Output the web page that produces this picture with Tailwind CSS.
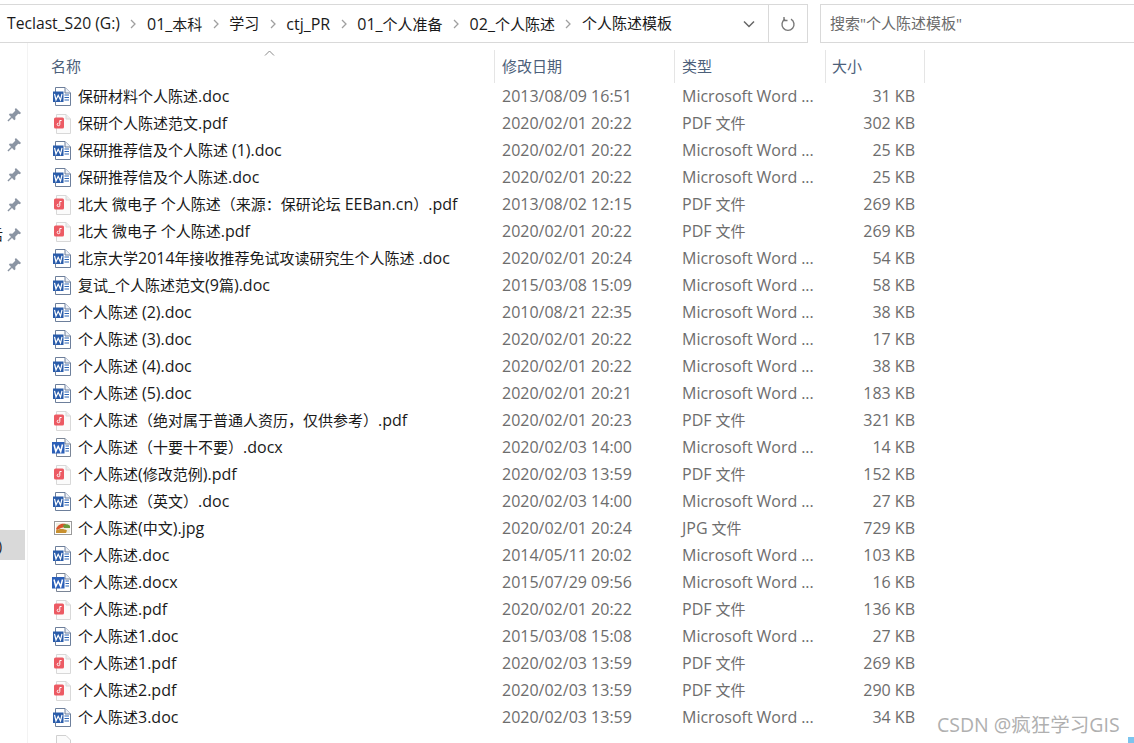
<!DOCTYPE html>
<html lang="en">
    <head>
        <meta charset="utf-8">
        <title>个人陈述模板</title>
        <script src="https://cdn.jsdelivr.net/npm/@tailwindcss/browser@4"></script>
    </head>
    <body class="bg-white text-[#1a1a1a] overflow-hidden" style="font-family: 'Open Sans', 'Noto Sans CJK SC', sans-serif;">

        <!-- icons -->
        <svg class="hidden">
            <symbol id="word" viewBox="0 0 20 20">
                <path d="M3.500 .5H13L18.500 6V18.500H3.500Z" fill="#fff" stroke="#6d7f9b"/>
                <path d="M13 .5V6H18.500" fill="#eef2f8" stroke="#6d7f9b"/>
                <rect x="1" y="4.500" width="10.500" height="10.500" fill="#2a5caa"/>
                <path d="M2.500 6.800 4 13 6.200 8.300 8.500 13 10 6.800" fill="none" stroke="#fff" stroke-width="1.200"/>
                <path d="M12.500 8H17M12.500 10.500H17M12.500 13H17" stroke="#2f66b5"/>
            </symbol>
            <symbol id="wordx" viewBox="0 0 20 20">
                <path d="M4.500 .5H13L18.500 6V18.500H4.500Z" fill="#fff" stroke="#7a8596"/>
                <path d="M13 .5V6H18.500" fill="#eef2f8" stroke="#7a8596"/>
                <rect x="0" y="4" width="12.500" height="11.500" fill="#2b5fb8"/>
                <path d="M2 6.500 3.800 13.500 6.200 8.500 8.700 13.500 10.500 6.500" fill="none" stroke="#fff" stroke-width="1.500"/>
                <path d="M13.500 8H17M13.500 10.500H17M13.500 13H17" stroke="#2f66b5"/>
            </symbol>
            <symbol id="pdf" viewBox="0 0 20 20">
                <path d="M4.500 .5H14L18.500 5V19.500H4.500Z" fill="#fbfbfb" stroke="#d8d8d8"/>
                <path d="M14 .5V5H18.500" fill="#eee" stroke="#d8d8d8"/>
                <rect x="2" y="3.500" width="10" height="11" rx="1.500" fill="#ec5a63"/>
                <path d="M7.800 6.500V10.400A1.300 1.300 0 1 1 6.500 9.100M7.800 6.500H9.600" fill="none" stroke="#fff" stroke-width="1"/>
            </symbol>
            <symbol id="jpg" viewBox="0 0 20 20">
                <rect x="2.500" y="2.500" width="17" height="13" fill="#fff" stroke="#9a9a9a"/>
                <rect x="4" y="4" width="14" height="10" fill="#f1efe2"/>
                <path d="M4 10C6 5 10 4 14 5L13 8 9 9 5 11Z" fill="#d9542b"/>
                <path d="M11 6C13 4.500 17 5 18 7V9H12Z" fill="#6b9a3c"/>
                <path d="M4 14V11.500C7 9.500 12 9.500 15 11.500L14 14Z" fill="#c8902f"/>
            </symbol>
            <symbol id="blank" viewBox="0 0 20 20">
                <path d="M4.500 .5H14L18.500 5V19.500H4.500Z" fill="#fbfbfb" stroke="#d0d0d0"/>
            </symbol>
            <symbol id="pin" viewBox="0 0 16 16">
                <path d="M9.500 1 15 6.500 13.500 7.700 12 7.200 8.800 10.400 9 13 7.700 14 2 8.300 3 7 5.600 7.200 8.800 4 8.300 2.500Z" fill="#8b95a3"/>
                <path d="M5 11 1 15" stroke="#8b95a3" stroke-width="1.600"/>
            </symbol>
        </svg>

        <div class="relative h-[743px] w-[1134px] overflow-hidden">

            <!-- address bar -->
            <div class="flex pt-1 h-[43px]">
                <div class="flex items-stretch w-[808px] border-y border-r border-[#d9d9d9] text-[15px]">
                    <div class="flex-1 flex items-center pl-[7px] whitespace-nowrap">
                        <span class="text-[15.7px]">Teclast_S20 (G:)</span>
                        <svg class="w-[8px] h-[10px] mx-[9.5px]" viewBox="0 0 8 10"><path d="M2 1 6 5 2 9" fill="none" stroke="#a0a0a0" stroke-width="1.300"/></svg>
                        <span><span class="text-[16px]">01_</span>本科</span>
                        <svg class="w-[8px] h-[10px] mx-[9.5px]" viewBox="0 0 8 10"><path d="M2 1 6 5 2 9" fill="none" stroke="#a0a0a0" stroke-width="1.300"/></svg>
                        <span>学习</span>
                        <svg class="w-[8px] h-[10px] mx-[9.5px]" viewBox="0 0 8 10"><path d="M2 1 6 5 2 9" fill="none" stroke="#a0a0a0" stroke-width="1.300"/></svg>
                        <span class="text-[16px]">ctj_PR</span>
                        <svg class="w-[8px] h-[10px] mx-[9.5px]" viewBox="0 0 8 10"><path d="M2 1 6 5 2 9" fill="none" stroke="#a0a0a0" stroke-width="1.300"/></svg>
                        <span><span class="text-[16px]">01_</span>个人准备</span>
                        <svg class="w-[8px] h-[10px] mx-[9.5px]" viewBox="0 0 8 10"><path d="M2 1 6 5 2 9" fill="none" stroke="#a0a0a0" stroke-width="1.300"/></svg>
                        <span><span class="text-[16px]">02_</span>个人陈述</span>
                        <svg class="w-[8px] h-[10px] mx-[9.5px]" viewBox="0 0 8 10"><path d="M2 1 6 5 2 9" fill="none" stroke="#a0a0a0" stroke-width="1.300"/></svg>
                        <span>个人陈述模板</span>
                    </div>
                    <div class="w-[39px] flex items-center justify-center">
                        <svg class="w-[12px] h-[8px]" viewBox="0 0 12 8"><path d="M1 1.500 6 6.500 11 1.500" fill="none" stroke="#666" stroke-width="1.500"/></svg>
                    </div>
                    <div class="w-[39px] flex items-center justify-center border-l border-[#d9d9d9]">
                        <svg class="w-[16px] h-[16px]" viewBox="0 0 16 16"><path d="M5 3.200A6 6 0 1 0 11 3.200" fill="none" stroke="#777" stroke-width="1.400"/><path d="M4 1V4.500H7.500" fill="none" stroke="#777" stroke-width="1.400"/></svg>
                    </div>
                </div>
                <div class="ml-[12px] flex-1 flex items-center pl-[9px] border-y border-l border-[#d9d9d9] text-[15px] text-[#6b6b6b]">搜索"个人陈述模板"</div>
            </div>

            <div class="flex">
                <!-- nav pane, mostly cut off -->
                <div class="w-[28px] h-[700px] border-r border-[#f3f3f3] shrink-0 pt-[56px]">
                    <div class="flex flex-col items-start">
                        <div class="h-[30px] pl-[7px] flex items-center"><svg class="w-[15px] h-[15px]"><use href="#pin"/></svg></div>
                        <div class="h-[30px] pl-[7px] flex items-center"><svg class="w-[15px] h-[15px]"><use href="#pin"/></svg></div>
                        <div class="h-[30px] pl-[7px] flex items-center"><svg class="w-[15px] h-[15px]"><use href="#pin"/></svg></div>
                        <div class="h-[30px] pl-[7px] flex items-center"><svg class="w-[15px] h-[15px]"><use href="#pin"/></svg></div>
                        <div class="relative h-[30px] pl-[7px] flex items-center">
                            <span class="absolute left-[-11px] text-[14px]">后</span>
                            <svg class="w-[15px] h-[15px]"><use href="#pin"/></svg>
                        </div>
                        <div class="h-[30px] pl-[7px] flex items-center"><svg class="w-[15px] h-[15px]"><use href="#pin"/></svg></div>
                    </div>
                    <div class="mt-[251px] w-[25px] h-[30px] bg-[#d9d9d9] flex items-center overflow-hidden text-[14px]">
                        <span class="-ml-[2px]">)</span>
                    </div>
                </div>

                <div class="flex-1 min-w-0">
                    <!-- column headers -->
                    <div class="relative flex h-[40px] text-[15px] text-[#4c607a]">
                        <div class="w-[467px] pl-[23px] pt-[5px] border-r border-[#e5e5e5] mt-[7px]">名称</div>
                        <div class="w-[180px] pl-[7px] pt-[5px] border-r border-[#e5e5e5] mt-[7px]">修改日期</div>
                        <div class="w-[151px] pl-[7px] pt-[5px] border-r border-[#e5e5e5] mt-[7px]">类型</div>
                        <div class="w-[99px] pl-[6px] pt-[5px] border-r border-[#e5e5e5] mt-[7px]">大小</div>
                        <svg class="absolute left-[236px] top-[7px] w-[11px] h-[6px]" viewBox="0 0 11 6"><path d="M1 5.500 5.500 1 10 5.500" fill="none" stroke="#8a8a8a"/></svg>
                    </div>
                    <!-- rows get filled in below -->
                    <div id="files"></div>
                </div>
            </div>

            <div class="absolute left-[937px] top-[710px] text-[19.5px] text-[#b0b0b0] whitespace-nowrap">CSDN @疯狂学习GIS</div>
            <div class="absolute right-0 bottom-0 w-[6px] h-[6px] bg-[#7cc4ee]"></div>
        </div>

        <script>
            const files = [
                ['word', '保研材料个人陈述.doc', '2013/08/09 16:51', 'Microsoft Word ...', '31 KB'],
                ['pdf', '保研个人陈述范文.pdf', '2020/02/01 20:22', 'PDF 文件', '302 KB'],
                ['word', '保研推荐信及个人陈述 (1).doc', '2020/02/01 20:22', 'Microsoft Word ...', '25 KB'],
                ['word', '保研推荐信及个人陈述.doc', '2020/02/01 20:22', 'Microsoft Word ...', '25 KB'],
                ['pdf', '北大 微电子 个人陈述（来源：保研论坛 EEBan.cn）.pdf', '2013/08/02 12:15', 'PDF 文件', '269 KB'],
                ['pdf', '北大 微电子 个人陈述.pdf', '2020/02/01 20:22', 'PDF 文件', '269 KB'],
                ['word', '北京大学2014年接收推荐免试攻读研究生个人陈述 .doc', '2020/02/01 20:24', 'Microsoft Word ...', '54 KB'],
                ['word', '复试_个人陈述范文(9篇).doc', '2015/03/08 15:09', 'Microsoft Word ...', '58 KB'],
                ['word', '个人陈述 (2).doc', '2010/08/21 22:35', 'Microsoft Word ...', '38 KB'],
                ['word', '个人陈述 (3).doc', '2020/02/01 20:22', 'Microsoft Word ...', '17 KB'],
                ['word', '个人陈述 (4).doc', '2020/02/01 20:22', 'Microsoft Word ...', '38 KB'],
                ['word', '个人陈述 (5).doc', '2020/02/01 20:21', 'Microsoft Word ...', '183 KB'],
                ['pdf', '个人陈述（绝对属于普通人资历，仅供参考）.pdf', '2020/02/01 20:23', 'PDF 文件', '321 KB'],
                ['wordx', '个人陈述（十要十不要）.docx', '2020/02/03 14:00', 'Microsoft Word ...', '14 KB'],
                ['pdf', '个人陈述(修改范例).pdf', '2020/02/03 13:59', 'PDF 文件', '152 KB'],
                ['word', '个人陈述（英文）.doc', '2020/02/03 14:00', 'Microsoft Word ...', '27 KB'],
                ['jpg', '个人陈述(中文).jpg', '2020/02/01 20:24', 'JPG 文件', '729 KB'],
                ['word', '个人陈述.doc', '2014/05/11 20:02', 'Microsoft Word ...', '103 KB'],
                ['wordx', '个人陈述.docx', '2015/07/29 09:56', 'Microsoft Word ...', '16 KB'],
                ['pdf', '个人陈述.pdf', '2020/02/01 20:22', 'PDF 文件', '136 KB'],
                ['word', '个人陈述1.doc', '2015/03/08 15:08', 'Microsoft Word ...', '27 KB'],
                ['pdf', '个人陈述1.pdf', '2020/02/03 13:59', 'PDF 文件', '269 KB'],
                ['pdf', '个人陈述2.pdf', '2020/02/03 13:59', 'PDF 文件', '290 KB'],
                ['word', '个人陈述3.doc', '2020/02/03 13:59', 'Microsoft Word ...', '34 KB'],
                ['blank', '', '', '', ''],
            ];

            // latin runs sit a pixel larger than the cjk ones, like the real font does
            const latin = s => s.replace(/[\x21-\x7e]+/g, m => `<span class="text-[16px]">${m}</span>`);

            document.getElementById('files').innerHTML = files.map(([icon, name, date, type, size]) => `
                <div class="flex items-center h-[27px] text-[15px] whitespace-nowrap">
                    <svg class="w-[20px] h-[20px] ml-[24px] mr-[6px] shrink-0"><use href="#${icon}"/></svg>
                    <div class="w-[424px] pb-[2px]">${latin(name)}</div>
                    <div class="w-[180px] pb-[2px] text-[16px] text-[#6d6d6d]">${date}</div>
                    <div class="w-[150px] pb-[2px] text-[#6d6d6d]">${latin(type)}</div>
                    <div class="w-[83px] pb-[2px] text-right text-[16px] text-[#6d6d6d]">${size}</div>
                </div>`).join('');
        </script>
    </body>
</html>
